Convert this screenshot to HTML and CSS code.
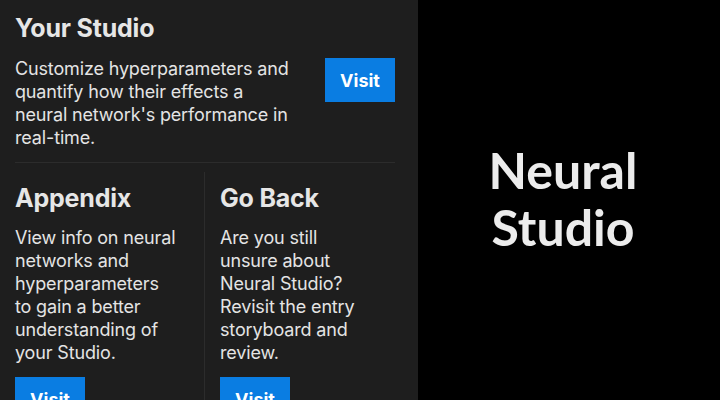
FILE: index.html
```html
<!DOCTYPE html>
<html>
<head>
<meta charset="utf-8">
<link rel="stylesheet" href="styles.css">
</head>
<body>
<div class="page">
  <div class="panel">
    <section class="studio">
      <h1 class="title">Your Studio</h1>
      <div class="studio-row">
        <p class="text studio-text">Customize hyperparameters and quantify how their effects a neural network's performance in real-time.</p>
        <button class="btn">Visit</button>
      </div>
    </section>
    <div class="divider"></div>
    <div class="cols">
      <section class="col col-left">
        <h2 class="title">Appendix</h2>
        <p class="text">View info on neural networks and hyperparameters to gain a better understanding of your Studio.</p>
        <button class="btn">Visit</button>
      </section>
      <section class="col col-right">
        <h2 class="title">Go Back</h2>
        <p class="text">Are you still unsure about Neural Studio? Revisit the entry storyboard and review.</p>
        <button class="btn">Visit</button>
      </section>
    </div>
  </div>
  <div class="hero">
    <div class="hero-title">Neural<br>Studio</div>
  </div>
</div>
</body>
</html>
```
FILE: styles.css
```css
* { box-sizing: border-box; }
html, body { margin: 0; padding: 0; }
body {
  width: 720px;
  height: 400px;
  overflow: hidden;
  background: #000;
  font-family: Inter, "Liberation Sans", sans-serif;
}
.page {
  display: flex;
  height: 400px;
}
.panel {
  width: 418px;
  flex: none;
  background: #1e1e1e;
  padding: 13px 23px 0 15px;
  overflow: hidden;
}
.title {
  margin: 0;
  font-size: 25px;
  line-height: 31px;
  font-weight: 700;
  color: #e6e6e6;
  letter-spacing: -0.2px;
}
.text {
  margin: 0;
  font-size: 18px;
  line-height: 23px;
  color: #e4e4e4;
  font-weight: 400;
  letter-spacing: -0.15px;
}
.studio-row {
  display: flex;
  justify-content: space-between;
  align-items: flex-start;
  margin-top: 13px;
}
.studio-text { width: 285px; }
.btn {
  width: 70px;
  height: 44px;
  border: none;
  border-radius: 0;
  background: #0a7de2;
  color: #fff;
  font-family: Inter, "Liberation Sans", sans-serif;
  font-size: 18px;
  font-weight: 700;
  padding: 0;
}
.studio .btn { margin-top: 1px; }
.divider {
  height: 1px;
  background: #2c2c2c;
  margin-top: 13px;
}
.cols {
  display: grid;
  grid-template-columns: 190px 190px;
  margin-top: 9px;
  height: 240px;
}
.col { padding-top: 11px; }
.col-left {
  border-right: 1px solid #2c2c2c;
  padding-right: 25px;
}
.col-right {
  padding-left: 15px;
  padding-right: 26px;
}
.col .text { margin-top: 12px; }
.col .btn { margin-top: 13px; }
.hero {
  flex: 1;
  display: flex;
  align-items: center;
  justify-content: center;
  padding-right: 12px;
  padding-bottom: 2px;
}
.hero-title {
  font-family: Lato, "Noto Sans", sans-serif;
  font-weight: 700;
  font-size: 50px;
  line-height: 57px;
  color: #ececec;
  text-align: center;
}
```
